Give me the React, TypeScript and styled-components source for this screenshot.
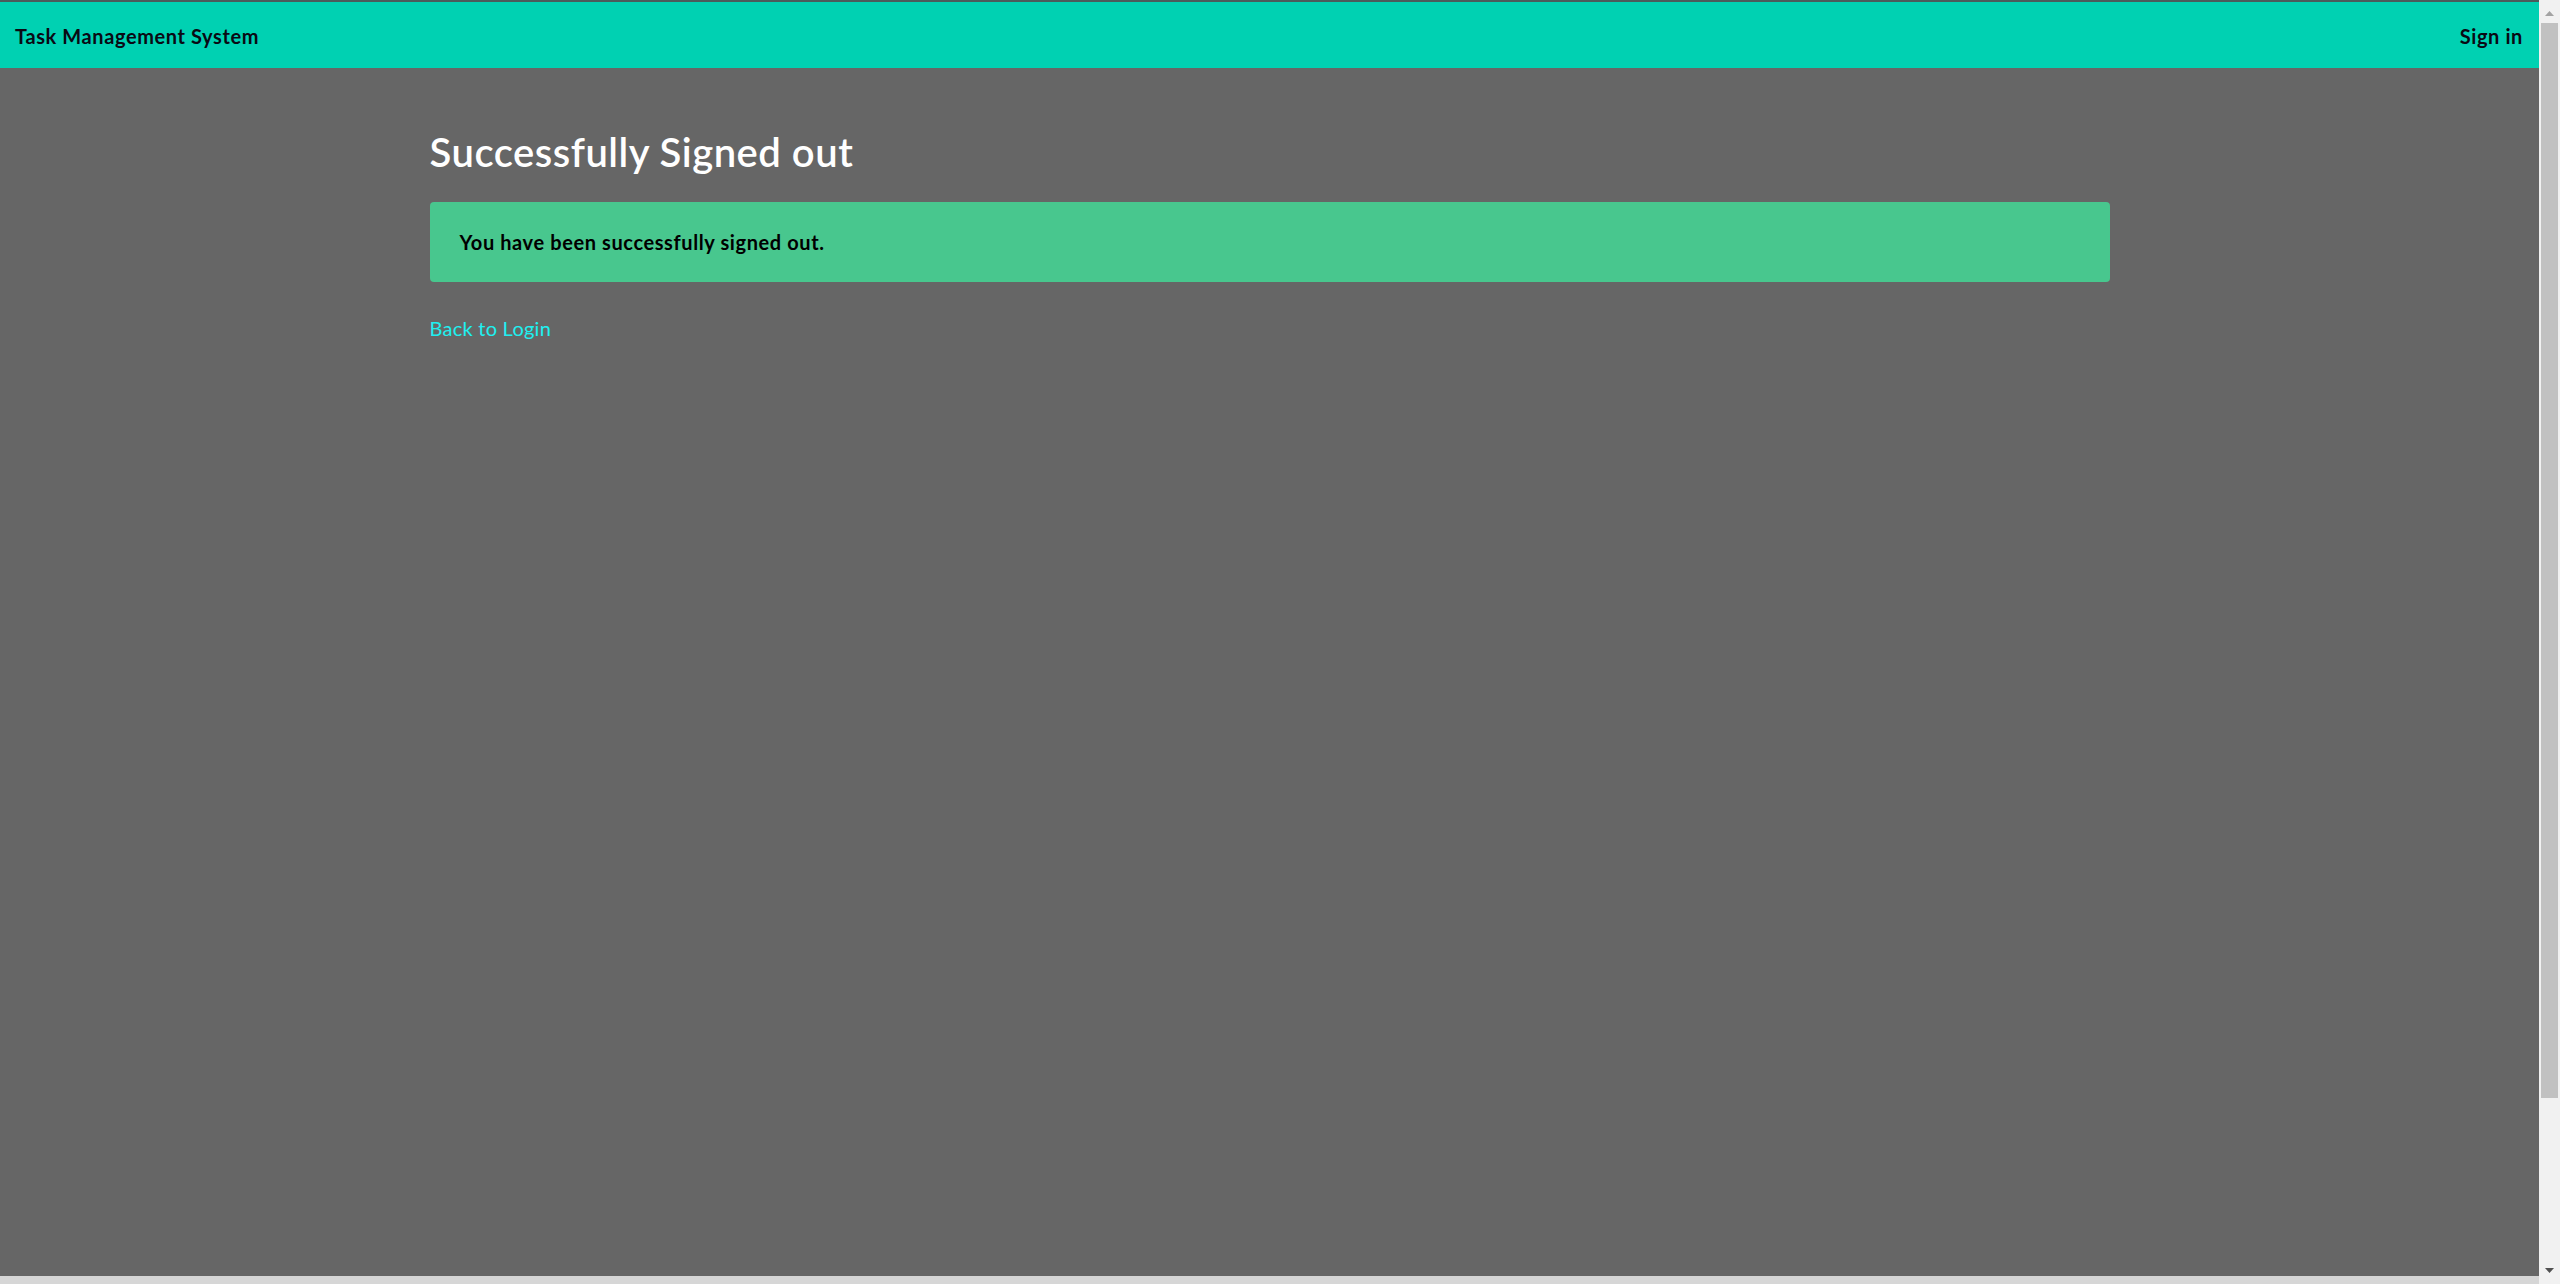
import React from "react";
import styled, { createGlobalStyle } from "styled-components";

const GlobalStyle = createGlobalStyle`
  html, body {
    margin: 0;
    height: 100%;
    overflow: hidden;
    background: #666666;
  }
  body {
    font-family: Lato, "Segoe UI", "Noto Sans", sans-serif;
    font-size: 20px;
    line-height: 1.5;
    letter-spacing: 0.6px;
    color: #000;
  }
  #root {
    height: 100%;
  }
`;

const Frame = styled.div`
  display: grid;
  grid-template-columns: 1fr 21px;
  height: 100%;
`;

const Viewport = styled.div`
  display: flex;
  flex-direction: column;
  min-width: 0;
  overflow: hidden;
`;

const Navbar = styled.nav`
  display: flex;
  align-items: center;
  justify-content: space-between;
  flex: none;
  height: 64px;
  padding: 2px 16px 0 15px;
  background: #00d1b2;
  border-top: 2px solid #4b5b5b;
  box-sizing: content-box;
`;

const NavText = styled.span`
  font-weight: 700;
  font-size: 20px;
  color: #0a0a14;
`;

const Main = styled.main`
  flex: 1;
`;

const Container = styled.section`
  width: 1680px;
  margin: 0 auto;
  padding-top: 60px;
`;

const Title = styled.h1`
  margin: 0 0 26px;
  font-size: 40px;
  font-weight: 600;
  line-height: 48px;
  letter-spacing: 0.5px;
  color: #ffffff;
`;

const Notification = styled.div`
  box-sizing: border-box;
  height: 80px;
  padding: 25px 50px 25px 30px;
  border-radius: 4px;
  background: #48c78e;
  font-weight: 700;
  font-size: 20px;
  line-height: 30px;
  color: #000;
`;

const BackLink = styled.a`
  display: inline-block;
  margin-top: 31px;
  font-size: 20px;
  line-height: 30px;
  letter-spacing: 0.25px;
  color: #1ef0f0;
  text-decoration: none;
`;

const FooterStrip = styled.footer`
  flex: none;
  height: 8px;
  background: #d6d6d6;
`;

const Scrollbar = styled.div`
  display: grid;
  grid-template-rows: 21px 1fr 21px;
  background: #f1f1f1;
`;

const ScrollButton = styled.div`
  display: flex;
  align-items: center;
  justify-content: center;
`;

const Track = styled.div`
  display: flex;
  flex-direction: column;
  padding: 2px 2px 0;
`;

const Thumb = styled.div`
  height: 1075px;
  background: #c1c1c1;
`;

function Arrow({ up, color }: { up?: boolean; color: string }) {
  return (
    <svg width="9" height="5" viewBox="0 0 9 5" style={{ transform: up ? "translateY(3px)" : "translateY(-3px)" }}>
      <polygon points={up ? "0,5 4.5,0 9,5" : "0,0 9,0 4.5,5"} fill={color} />
    </svg>
  );
}

export default function App() {
  return (
    <>
      <GlobalStyle />
      <Frame>
        <Viewport>
          <Navbar>
            <NavText>Task Management System</NavText>
            <NavText>Sign in</NavText>
          </Navbar>
          <Main>
            <Container>
              <Title>Successfully Signed out</Title>
              <Notification>You have been successfully signed out.</Notification>
              <BackLink href="#">Back to Login</BackLink>
            </Container>
          </Main>
          <FooterStrip />
        </Viewport>
        <Scrollbar>
          <ScrollButton>
            <Arrow up color="#a3a3a3" />
          </ScrollButton>
          <Track>
            <Thumb />
          </Track>
          <ScrollButton>
            <Arrow color="#505050" />
          </ScrollButton>
        </Scrollbar>
      </Frame>
    </>
  );
}
